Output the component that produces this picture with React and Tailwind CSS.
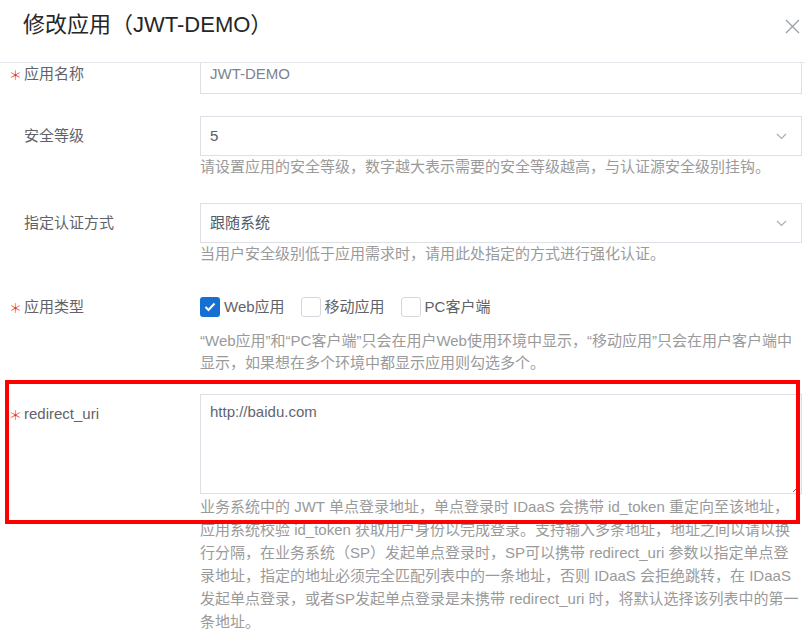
import React from "react";

const FONT = { fontFamily: '"Liberation Sans", Arial, "Noto Sans CJK SC", sans-serif' };
const CJK = { fontFamily: '"Noto Sans CJK SC", sans-serif' };

function Label({ required, children }) {
  return (
    <div className="w-[200px] shrink-0 flex pl-[9px] h-[40px] items-center text-[15px] text-[#5f6368]">
      <span className="w-[15px] text-[#f5222d] text-[13px] leading-none font-light" style={CJK}>{required ? "＊" : ""}</span>
      <span>{children}</span>
    </div>
  );
}

function Chevron() {
  return (
    <svg width="11" height="7" viewBox="0 0 11 7" className="text-[#a8adb5]">
      <path d="M1 1 L5.5 5.5 L10 1" fill="none" stroke="currentColor" strokeWidth="1.2" />
    </svg>
  );
}

function Select({ value }) {
  return (
    <div className="h-[40px] border border-[#dcdfe6] flex items-center justify-between pl-[9px] pr-[14px] text-[15px] text-[#555b65]">
      <span>{value}</span>
      <Chevron />
    </div>
  );
}

function Help({ lines, lh = "leading-[22px]" }) {
  return (
    <div className={`text-[15px] text-[#9a9a9a] ${lh}`}>
      {lines.map((l, i) => (
        <div key={i} className="whitespace-nowrap">{l}</div>
      ))}
    </div>
  );
}

function Checkbox({ checked, label }) {
  return (
    <div className="flex items-center gap-[4px] mr-[16px]">
      {checked ? (
        <span className="w-[20px] h-[20px] rounded-[3px] bg-[#1570d4] flex items-center justify-center">
          <svg width="12" height="10" viewBox="0 0 12 10">
            <path d="M1.5 5 L4.5 8 L10.5 1.5" fill="none" stroke="white" strokeWidth="2" />
          </svg>
        </span>
      ) : (
        <span className="w-[20px] h-[20px] rounded-[3px] border border-[#d4d8de] bg-white" />
      )}
      <span className="text-[15px] text-[#5f6368]">{label}</span>
    </div>
  );
}

export default function App() {
  return (
    <div className="w-[805px] h-[634px] bg-white overflow-hidden flex flex-col" style={FONT}>
      <div className="h-[63px] shrink-0 border-b border-[#e4e7ec] flex items-start justify-between pl-[23px] pr-[5px] pt-[8px]">
        <div className="text-[22px] leading-[34px] text-[#262626]">修改应用（JWT-DEMO）</div>
        <svg width="15" height="15" viewBox="0 0 15 15" className="mt-[11px] text-[#9aa0a6]">
          <path d="M1 1 L14 14 M14 1 L1 14" stroke="currentColor" strokeWidth="1.3" />
        </svg>
      </div>
      <div className="flex-1 overflow-hidden">
        <div className="-mt-[9px] pr-[3px]">
          {/* 应用名称 */}
          <div className="flex mb-[22px]">
            <Label required>应用名称</Label>
            <div className="flex-1">
              <div className="h-[40px] border border-[#dcdfe6] flex items-center px-[9px] text-[15px] text-[#7b8391]">JWT-DEMO</div>
            </div>
          </div>
          {/* 安全等级 */}
          <div className="flex mb-[25px]">
            <Label>安全等级</Label>
            <div className="flex-1">
              <Select value="5" />
              <Help lines={["请设置应用的安全等级，数字越大表示需要的安全等级越高，与认证源安全级别挂钩。"]} />
            </div>
          </div>
          {/* 指定认证方式 */}
          <div className="flex mb-[22px]">
            <Label>指定认证方式</Label>
            <div className="flex-1">
              <Select value="跟随系统" />
              <Help lines={["当用户安全级别低于应用需求时，请用此处指定的方式进行强化认证。"]} />
            </div>
          </div>
          {/* 应用类型 */}
          <div className="flex mb-[20px]">
            <Label required>应用类型</Label>
            <div className="flex-1">
              <div className="h-[40px] flex items-center">
                <Checkbox checked label="Web应用" />
                <Checkbox label="移动应用" />
                <Checkbox label="PC客户端" />
              </div>
              <div className="mt-[3px]">
                <Help
                  lines={[
                    "“Web应用”和“PC客户端”只会在用户Web使用环境中显示，“移动应用”只会在用户客户端中",
                    "显示，如果想在多个环境中都显示应用则勾选多个。",
                  ]}
                />
              </div>
            </div>
          </div>
          {/* redirect_uri */}
          <div className="flex relative">
            <Label required>redirect_uri</Label>
            <div className="flex-1">
              <textarea
                readOnly
                defaultValue="http://baidu.com"
                className="block w-full h-[100px] border border-[#dcdfe6] px-[9px] py-[6px] text-[15px] leading-[22px] text-[#5f6670] outline-none resize-y"
                style={FONT}
              />
              <div className="mt-[1px]">
                <Help
                  lh="leading-[23px]"
                  lines={[
                    "业务系统中的 JWT 单点登录地址，单点登录时 IDaaS 会携带 id_token 重定向至该地址，",
                    "应用系统校验 id_token 获取用户身份以完成登录。支持输入多条地址，地址之间以请以换",
                    "行分隔，在业务系统（SP）发起单点登录时，SP可以携带 redirect_uri 参数以指定单点登",
                    "录地址，指定的地址必须完全匹配列表中的一条地址，否则 IDaaS 会拒绝跳转，在 IDaaS",
                    "发起单点登录，或者SP发起单点登录是未携带 redirect_uri 时，将默认选择该列表中的第一",
                    "条地址。",
                  ]}
                />
              </div>
            </div>
            <div className="absolute left-[5px] -top-[14px] w-[795px] h-[144px] border-4 border-[#ff0000] pointer-events-none" />
          </div>
        </div>
      </div>
    </div>
  );
}
